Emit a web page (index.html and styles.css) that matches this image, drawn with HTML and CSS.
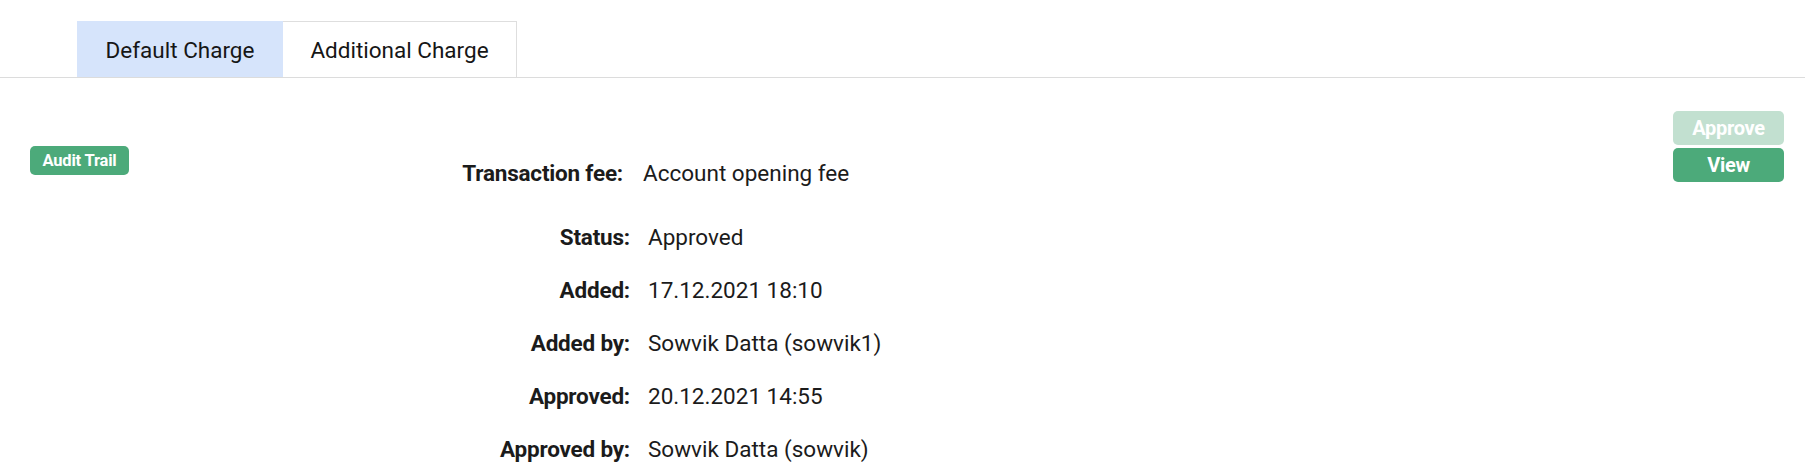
FILE: index.html
```html
<!DOCTYPE html>
<html>
<head>
<meta charset="utf-8">
<link rel="stylesheet" href="styles.css">
</head>
<body>
<div class="tabs">
  <div class="tab active">Default Charge</div>
  <div class="tab">Additional Charge</div>
</div>
<div class="main">
  <div class="left">
    <button class="btn audit">Audit Trail</button>
  </div>
  <div class="details">
    <div class="row first">
      <div class="label">Transaction fee:</div>
      <div class="value">Account opening fee</div>
    </div>
    <div class="grid">
      <div class="label">Status:</div><div class="value">Approved</div>
      <div class="label">Added:</div><div class="value">17.12.2021 18:10</div>
      <div class="label">Added by:</div><div class="value">Sowvik Datta (sowvik1)</div>
      <div class="label">Approved:</div><div class="value">20.12.2021 14:55</div>
      <div class="label">Approved by:</div><div class="value">Sowvik Datta (sowvik)</div>
    </div>
  </div>
  <div class="actions">
    <button class="btn action disabled">Approve</button>
    <button class="btn action">View</button>
  </div>
</div>
</body>
</html>
```
FILE: styles.css
```css
html, body {
  margin: 0;
  padding: 0;
  background: #fff;
  font-family: Roboto, "Noto Sans", sans-serif;
  color: #1b1b1b;
}
.tabs {
  display: flex;
  padding: 21px 0 0 77px;
  border-bottom: 1px solid #dcdcdc;
}
.tab {
  height: 56px;
  box-sizing: border-box;
  display: flex;
  align-items: center;
  justify-content: center;
  font-size: 22.5px;
  border: 1px solid #dedede;
  border-bottom: none;
  background: #fff;
  color: #161616;
}
.tab.active {
  width: 206px;
  background: #d6e4fb;
  border-color: #d6e4fb;
}
.tab:not(.active) {
  width: 234px;
  border-left: none;
}
.main {
  display: flex;
  padding: 33px 21px 0 30px;
}
.left {
  width: 370px;
  flex: none;
  padding-top: 35px;
}
.btn {
  border: none;
  color: #fff;
  font-family: Roboto, sans-serif;
  font-weight: 700;
  background: #4caa7a;
  border-radius: 5px;
  cursor: pointer;
}
.audit {
  width: 99px;
  height: 29px;
  font-size: 16.5px;
  padding: 0;
  letter-spacing: -0.2px;
}
.details {
  padding-top: 35px;
}
.row.first {
  display: flex;
  align-items: center;
  height: 53px;
  margin-bottom: 11px;
}
.row.first .label {
  width: 223px;
  text-align: right;
}
.row.first .value {
  margin-left: 20px;
}
.grid {
  display: grid;
  grid-template-columns: 230px auto;
  grid-auto-rows: 53px;
  column-gap: 18px;
  align-items: center;
}
.label {
  font-weight: 700;
  font-size: 22.5px;
  text-align: right;
  letter-spacing: -0.2px;
}
.value {
  font-size: 22.5px;
}
.actions {
  margin-left: auto;
  display: flex;
  flex-direction: column;
  gap: 3px;
  width: 111px;
}
.action {
  height: 34px;
  font-size: 20px;
  padding: 0;
  letter-spacing: -0.3px;
}
.action.disabled {
  background: #c2e0d0;
}
```
